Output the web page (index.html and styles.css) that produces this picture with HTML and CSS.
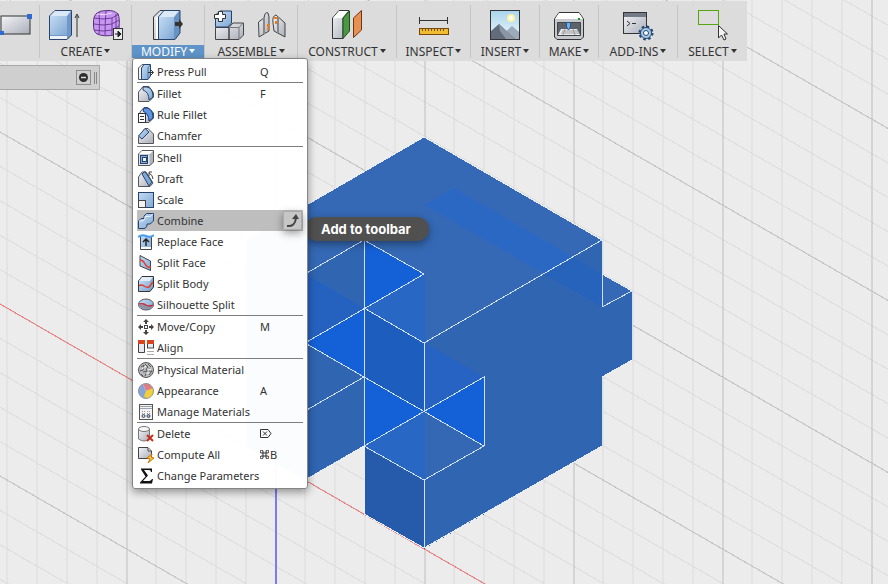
FILE: index.html
```
<!DOCTYPE html>
<html lang="en">
<head>
    <meta charset="UTF-8">
    <meta name="viewport" content="width=device-width, initial-scale=1.0">
    <title>Modify Menu</title>
    <link rel="stylesheet" href="styles.css">
</head>
<body>
    <svg class="canvas" aria-hidden="true">
      <defs>
        <linearGradient id="steel" x1="0" y1="0" x2="1" y2="1">
          <stop offset="0" stop-color="#f4f5f8"/><stop offset="1" stop-color="#a9adb8"/>
        </linearGradient>
        <linearGradient id="blue" x1="0" y1="0" x2="1" y2="1">
          <stop offset="0" stop-color="#c3dbf3"/><stop offset="1" stop-color="#80a8d4"/>
        </linearGradient>
        <linearGradient id="sky" x1="0" y1="0" x2="0" y2="1">
          <stop offset="0" stop-color="#a9d5ee"/><stop offset="1" stop-color="#eef7fb"/>
        </linearGradient>
        <!-- one tile holds two major columns and one major diagonal step -->
        <pattern id="grid" x="126.5" y="33" width="298" height="172" patternUnits="userSpaceOnUse">
          <path class="minor" d="M29.8 0V172M59.6 0V172M89.4 0V172M119.2 0V172M178.8 0V172M208.6 0V172M238.4 0V172M268.2 0V172"/>
          <path class="minor" d="M0 34.4L298 206.4M0 68.8L298 240.8M0 103.2L298 275.2M0 137.6L298 309.6M0 -137.6L298 34.4M0 -103.2L298 68.8M0 -68.8L298 103.2M0 -34.4L298 137.6"/>
          <path class="major" d="M0 0V172M149 0V172M298 0V172M0 0L298 172"/>
        </pattern>
      </defs>
      <rect width="100%" height="100%" fill="url(#grid)"/>
      <path class="axis-x" d="M0 304L1600 1228"/>
      <path class="axis-z" d="M275.5 300V1200"/>
      <g class="model">
        <path fill="#3569b5" d="M424.5 137L602.5 240L424.5 343L364.5 240L305 274L246 240Z"/>
        <path fill="#2b68c4" d="M424.5 205L454 188L602.5 274V307Z"/>
        <path fill="#3065b2" d="M424.5 343L602.5 240V307L632 291V360L602.5 377V446L424.5 548.5Z"/>
        <path fill="#2763bb" d="M543.5 274L573 257L602.5 274V307Z"/>
        <path fill="#3569b5" d="M602.5 274L632 291L602.5 308Z"/>
        <path fill="#3065b2" d="M246 240L305 274L364.5 240V446L305 480L246 446Z"/>
        <path fill="#2562c0" d="M305 274L364.5 308L305 343Z"/>
        <path fill="#1461d7" d="M364.5 240L424.5 274L364.5 308Z"/>
        <path fill="#2967c4" d="M424.5 274V343L364.5 308Z"/>
        <path fill="#1461d7" d="M364.5 308V377L305 343Z"/>
        <path fill="#1d5dbe" d="M364.5 308L424.5 343V411L364.5 377Z"/>
        <path fill="#2663c2" d="M424.5 343L484 377L424.5 411Z"/>
        <path fill="#1461d7" d="M364.5 377L424.5 411L364.5 446Z"/>
        <path fill="#1461d7" d="M484 377V446L424.5 411Z"/>
        <path fill="#2967c4" d="M424.5 411V480L364.5 446Z"/>
        <path fill="#3568b4" d="M424.5 411L484 446L424.5 480Z"/>
        <path fill="#265bab" d="M364.5 446L424.5 480V548.5L364.5 514Z"/>
        <path class="edge" d="M424 343L602 240V307L632 291V360M602 377V446M305 274L364 240L424 274L305 343L484 446L424 480L364 446L484 377V446M364 240V446M364 308L424 343V411M364 377L305 411M424 480V548"/>
        <path class="edge outline" d="M246 240L424 137L602 240M602 274L632 291M632 360L602 377M602 446L424 548L364 514V446L305 480"/>
      </g>
    </svg>

    <nav class="toolbar">
      <div class="group">
        <div class="icons">
          <svg width="32" height="24" viewBox="0 0 32 24"><rect x="1" y="3" width="29" height="18" fill="url(#steel)" stroke="#333"/><rect x="27" y="1" width="5" height="5" fill="#2f6ad0"/><rect x="0" y="18" width="4" height="4" fill="#2f6ad0"/></svg>
        </div>
      </div>
      <div class="group">
        <div class="icons">
          <svg width="32" height="32" viewBox="0 0 32 32"><path d="M1.500 7L7 1.500H23.500V26L19 30.500H1.500Z" fill="#6f98c8" stroke="#26426d"/><path d="M2 7L7 2H23L19 7Z" fill="#d9e7f6"/><path d="M2 7H19V26H2Z" fill="url(#blue)"/><path d="M2 27H19V30H2Z" fill="#eef1f5"/><path d="M29 28V7M27 9L29 5L31 9" fill="none" stroke="#333"/></svg>
          <svg width="32" height="32" viewBox="0 0 32 32"><path d="M5 4Q8 1.500 15 1.500Q22 1 26 5Q28 9 27 19Q27 23 22 26Q12 28 5 25Q1 22 1.500 15Q1 7 5 4Z" fill="#c697ee" stroke="#59307f"/><path d="M2 9Q11 11 20 9L27 5M2 15Q11 17 20 15L27 11M2 21Q11 23 20 21L27 17M7 3Q8 14 7 26M14 2Q13 14 13 27M20 9V26M24 5V24" fill="none" stroke="#713b9e"/><path d="M5 5Q13 7 20 4" fill="none" stroke="#f0dcff"/><rect x="21.500" y="19.500" width="9" height="11" fill="#e9e9e9" stroke="#333"/><path d="M23 25H28M26 22L29 25L26 28Z" fill="#222" stroke="#222"/></svg>
        </div>
        <button class="label" type="button">CREATE</button>
      </div>
      <div class="group modify">
        <div class="icons">
          <svg width="32" height="32" viewBox="0 0 32 32"><path d="M1.500 8L8 1.500H14V30.500H1.500Z" fill="url(#steel)" stroke="#333"/><path d="M6.500 8L12 1.500H28V24L23 30.500H6.500Z" fill="#6992c4" stroke="#26426d"/><path d="M7 8L12 2H27L22 8Z" fill="#dbe9f7"/><path d="M7 8H22V30H7Z" fill="url(#blue)"/><path d="M5 8V30" stroke="#fff" stroke-width="2"/><path d="M23 13H27V10L31 15L27 20V17H23Z" fill="#333"/></svg>
        </div>
        <button class="label active" type="button" aria-expanded="true">MODIFY</button>
      </div>
      <div class="group">
        <div class="icons">
          <svg width="32" height="32" viewBox="0 0 32 32"><path d="M2.500 18.500V30.500H16V18.500ZM16 18.500L20 14H30.500V26L26 30.500H16Z" fill="url(#steel)" stroke="#444"/><path d="M16.500 18.500H26L30 14M26 18.500V30" fill="none" stroke="#777"/><path d="M2.500 6L7 2H18.500V14L15 18H2.500Z" fill="url(#blue)" stroke="#26426d"/><path d="M5.500 2.500H9.500V5.500H12.500V9.500H9.500V12.500H5.500V9.500H1.500V5.500H5.500Z" fill="#fff" stroke="#333"/></svg>
          <svg width="32" height="32" viewBox="0 0 32 32"><path d="M1.500 13L7 9Q8 2 11 4L12 8V22L2 28Z" fill="url(#steel)" stroke="#444"/><path d="M16 14Q15 7 19 6L28 14V28L17 22Z" fill="url(#steel)" stroke="#444"/><path d="M7 9V25M21 8V24" stroke="#888" stroke-width="2"/><path d="M11 19V21M11 15V18M19 12V15M17 9H20" stroke="#ff7900" stroke-width="2"/></svg>
        </div>
        <button class="label" type="button">ASSEMBLE</button>
      </div>
      <div class="group">
        <div class="icons">
          <svg width="32" height="32" viewBox="0 0 32 32"><path d="M1.500 9L8 1.500H18L12 9V29.500H1.500Z" fill="url(#steel)" stroke="#333"/><path d="M12 9L18.500 2V22L12 29.500Z" fill="#4d9744" stroke="#1e4d1b"/><path d="M2 9L8 2H17L11 9Z" fill="#fff"/><path d="M22.500 9L30.500 1.500V21L22.500 28.500Z" fill="#e69052" stroke="#733313"/></svg>
        </div>
        <button class="label" type="button">CONSTRUCT</button>
      </div>
      <div class="group">
        <div class="icons">
          <svg width="32" height="32" viewBox="0 0 32 32"><path d="M2 11.500H30M1.500 8V15M29.500 8V15" stroke="#333"/><rect x="1.500" y="19.500" width="29" height="6" fill="#f0bd31" stroke="#79460b"/><path d="M4.500 20V22M7.500 20V22M10.500 20V22M13.500 20V22M16.500 20V22M19.500 20V22M22.500 20V22M25.500 20V22" stroke="#775019"/></svg>
        </div>
        <button class="label" type="button">INSPECT</button>
      </div>
      <div class="group">
        <div class="icons">
          <svg width="32" height="32" viewBox="0 0 32 32"><rect x="1.500" y="1.500" width="29" height="29" fill="url(#sky)"/><circle cx="22" cy="9" r="4" fill="#fff3a4"/><circle cx="22" cy="9" r="2" fill="#fff"/><path d="M14 25L23 17L30 23V30H14Z" fill="#9caab9"/><path d="M2 22L10 15L26 30H2Z" fill="#626c7c"/><path d="M10 15L26 30H17L11 22Z" fill="#8b95a4"/><rect x="1.500" y="1.500" width="29" height="29" fill="none" stroke="#333"/></svg>
        </div>
        <button class="label" type="button">INSERT</button>
      </div>
      <div class="group">
        <div class="icons">
          <svg width="32" height="32" viewBox="0 0 32 32"><path d="M1.500 10L6 3.500H26L30.500 10V28L28 30.500H4L1.500 28Z" fill="#c5c8ce" stroke="#333"/><path d="M2 10L6 4H26L30 10Z" fill="#fff"/><path d="M4.500 13.500H27.500V26.500H4.500Z" fill="#5d626b" stroke="#444"/><path d="M8 20H24L27 26H5Z" fill="#e9edf1"/><path d="M9 22H25M8 24H26M12 20L10 26M20 20L22 26" stroke="#999"/><path d="M13.500 13.500H17.500V18L15.500 21L13.500 18Z" fill="#74afe4" stroke="#22578d"/><path d="M25 10H27" stroke="#0b9a1a" stroke-width="2"/></svg>
        </div>
        <button class="label" type="button">MAKE</button>
      </div>
      <div class="group">
        <div class="icons">
          <svg width="32" height="32" viewBox="0 0 32 32"><rect x="1.500" y="3.500" width="23" height="21" fill="url(#steel)" stroke="#333"/><path d="M2 4H24V8H2Z" fill="#747b87"/><path d="M5 12L8 14.500L5 17M10 14.500H14" fill="none" stroke="#333"/><circle cx="24" cy="24" r="5.500" fill="#a4c9ec" stroke="#24456f"/><circle cx="24" cy="24" r="6.500" fill="none" stroke="#24456f" stroke-width="2" stroke-dasharray="2.500 2.600"/><circle cx="24" cy="24" r="2.500" fill="#fff" stroke="#24456f"/></svg>
        </div>
        <button class="label" type="button">ADD-INS</button>
      </div>
      <div class="group">
        <div class="icons">
          <svg width="32" height="32" viewBox="0 0 32 32"><rect x="1.500" y="1.500" width="20" height="14" fill="none" stroke="#59a50f"/><path d="M21.500 16.500V29L24.500 26L27 31L29 30L27 25H30.500Z" fill="#f4f4f4" stroke="#333"/></svg>
        </div>
        <button class="label" type="button">SELECT</button>
      </div>
    </nav>

    <aside class="browser">
      <button class="collapse" type="button" aria-label="Collapse"><svg width="11" height="11" viewBox="0 0 11 11"><circle cx="5.500" cy="5.500" r="4.500" fill="#2e2e2e"/><path d="M3 5.500H8" stroke="#ddd" stroke-width="1.500"/></svg></button>
      <span class="grip"></span>
    </aside>

    <div class="dropdown">
      <ul class="menu">
        <li><button type="button"><svg width="16" height="16" viewBox="0 0 16 16"><path d="M.500 4L4 .500H7V15.500H.500Z" fill="#f4f4f4" stroke="#555"/><path d="M3.500 4L6 .500H12.500V12L10 15.500H3.500Z" fill="url(#blue)" stroke="#26426d"/><path d="M10 4V15M10 4L12 1" stroke="#55799f"/><path d="M10 8.500H15M13 6L15.500 8.500L13 11" fill="none" stroke="#333"/></svg><span>Press Pull</span><kbd>Q</kbd></button></li>
        <li class="divided"><button type="button"><svg width="16" height="16" viewBox="0 0 16 16"><path d="M.500 6L5 .500H11L15.500 7V11L11 15.500H.500Z" fill="url(#steel)" stroke="#555"/><path d="M5 1H9Q15 2 15 11L11 14Q11 6 5 4Z" fill="url(#blue)" stroke="#26426d"/></svg><span>Fillet</span><kbd>F</kbd></button></li>
        <li><button type="button"><svg width="16" height="16" viewBox="0 0 16 16"><path d="M2 5L6 .500H10L15.500 6V11L11 15.500H2Z" fill="url(#steel)" stroke="#555"/><path d="M6 1H9Q15 2 15 11L11 14Q11 7 5 4Z" fill="#5f96e1" stroke="#173d82"/><rect x=".500" y="6.500" width="7" height="9" fill="#fff" stroke="#333"/><path d="M2 9.500H6M2 12.500H6" stroke="#333"/></svg><span>Rule Fillet</span></button></li>
        <li><button type="button"><svg width="16" height="16" viewBox="0 0 16 16"><path d="M.500 9V15.500H15.500V6L10 .500H7Z" fill="url(#steel)" stroke="#555"/><path d="M.500 8L7 .500L11 4L4 11Z" fill="url(#blue)" stroke="#26426d"/></svg><span>Chamfer</span></button></li>
        <li class="divided"><button type="button"><svg width="16" height="16" viewBox="0 0 16 16"><path d="M.500 4L4 .500H15.500V12L12 15.500H.500Z" fill="#aeb3be" stroke="#555"/><path d="M1 4L4 1H15L12 4Z" fill="#fff"/><path d="M1 4.500H11.500V15H1Z" fill="#e4e6eb"/><rect x="2.500" y="5.500" width="7" height="8" fill="#83acd9" stroke="#26426d"/><rect x="4.500" y="7.500" width="4" height="4" fill="#eaf4fd" stroke="#26426d"/></svg><span>Shell</span></button></li>
        <li><button type="button"><svg width="16" height="16" viewBox="0 0 16 16"><path d="M.500 6L4 1H8L15 12L12 15.500H.500Z" fill="url(#steel)" stroke="#555"/><path d="M4 3L7 .500L14 11L11 15Z" fill="#7fa8d6" stroke="#26426d"/><path d="M15 8Q15 4 11 2M14 1H11V5" fill="none" stroke="#444"/></svg><span>Draft</span></button></li>
        <li><button type="button"><svg width="16" height="16" viewBox="0 0 16 16"><rect x=".500" y=".500" width="15" height="15" fill="url(#blue)" stroke="#26426d"/><rect x=".500" y="8.500" width="7" height="7" fill="#f2f2f2" stroke="#444"/></svg><span>Scale</span></button></li>
        <li class="hover"><button type="button"><svg width="16" height="16" viewBox="0 0 16 16"><path d="M.500 8L3 5.500H6V3L8.500 .500H15.500V8L12 11H9V13L7 15.500H.500Z" fill="url(#blue)" stroke="#26426d"/><path d="M1 8H5L7 6V3.500H12L15 1" fill="none" stroke="#e8f3ff"/></svg><span>Combine</span></button><button class="pin" type="button" aria-label="Add to toolbar"><svg width="16" height="16" viewBox="0 0 16 16"><path d="M2 13Q10 14 11 5" fill="none" stroke="#444" stroke-width="2"/><path d="M7 6L11 1L14 6Z" fill="#444"/></svg></button></li>
        <li><button type="button"><svg width="16" height="16" viewBox="0 0 16 16"><path d="M2.500 2V15.500H13.500V2" fill="url(#blue)" stroke="#444"/><path d="M3 13H13V15H3Z" fill="#fff"/><path d="M0 3Q4 0 8 2T16 1" fill="none" stroke="#4e9cef" stroke-width="2"/><path d="M8 12V5M5 8L8 5L11 8" fill="none" stroke="#222" stroke-width="1.500"/></svg><span>Replace Face</span></button></li>
        <li><button type="button"><svg width="16" height="16" viewBox="0 0 16 16"><path d="M2 .500L12.500 6V15.500L2 11Z" fill="url(#blue)" stroke="#444"/><path d="M2 5Q5 5 7 9T13 12" fill="none" stroke="#e33b2c" stroke-width="1.500"/></svg><span>Split Face</span></button></li>
        <li><button type="button"><svg width="16" height="16" viewBox="0 0 16 16"><path d="M.500 5L4 .500H15.500V11L12 15.500H.500Z" fill="#82a7d1" stroke="#333"/><path d="M1 5L4 1H15L12 5Z" fill="#e2edf8"/><path d="M1 5H12V15H1Z" fill="url(#blue)"/><path d="M1 10Q3 8 6 10T11 11L15 6" fill="none" stroke="#e33b2c" stroke-width="1.500"/></svg><span>Split Body</span></button></li>
        <li><button type="button"><svg width="16" height="16" viewBox="0 0 16 16"><ellipse cx="8" cy="7.500" rx="7.500" ry="5.500" fill="url(#blue)" stroke="#555"/><path d="M1 10Q8 14 15 10L15 8H1Z" fill="#8f93a6"/><path d="M1 7Q5 6 8 8T15 8" fill="none" stroke="#c6303d" stroke-width="1.500"/></svg><span>Silhouette Split</span></button></li>
        <li class="divided"><button type="button"><svg width="16" height="16" viewBox="0 0 16 16"><path d="M8 0L11 3H9V5H7V3H5ZM8 16L11 13H9V11H7V13H5ZM0 8L3 5V7H5V9H3V11ZM16 8L13 5V7H11V9H13V11Z" fill="#444"/><rect x="6.500" y="6.500" width="3" height="3" fill="#fff" stroke="#444"/></svg><span>Move/Copy</span><kbd>M</kbd></button></li>
        <li><button type="button"><svg width="16" height="16" viewBox="0 0 16 16"><path d="M.500 .500H6.500V12.500H.500ZM9.500 .500H15.500V8H9.500Z" fill="#e7e9ee" stroke="#444"/><path d="M0 0H7V4H0ZM9 0H16V4H9Z" fill="#d9441e"/><path d="M9 8.500H16M9 11.500H16M9 14.500H16" stroke="#aaa"/></svg><span>Align</span></button></li>
        <li class="divided"><button type="button"><svg width="16" height="16" viewBox="0 0 16 16"><circle cx="8" cy="8" r="7.500" fill="#b9bbbd" stroke="#555"/><path d="M3 5L6 3L5 8L2 9M7 2L10 5L8 8L12 7M10 2L13 5M5 10L9 9L7 14M11 9L14 9L11 13M3 12L5 14" fill="none" stroke="#555"/><path d="M4 7L8 4M9 7L13 8M8 11L11 11" stroke="#fff"/></svg><span>Physical Material</span></button></li>
        <li><button type="button"><svg width="16" height="16" viewBox="0 0 16 16"><path d="M8 8L5 1Q0 3 .500 9Q1 14 8 15.500Z" fill="#85a5dc"/><path d="M8 8L5 1Q12 -1 15 6Z" fill="#df7e84"/><path d="M8 8L15 5Q17 13 8 15.500L6 13Z" fill="#f1cf37"/><circle cx="8" cy="8" r="7.500" fill="none" stroke="#94918f"/></svg><span>Appearance</span><kbd>A</kbd></button></li>
        <li><button type="button"><svg width="16" height="16" viewBox="0 0 16 16"><rect x="1.500" y=".500" width="13" height="15" fill="#f3f3f3" stroke="#555"/><path d="M2 2.500H14M2 4.500H14" stroke="#9ba3af"/><path d="M4 7.500H7M9 7.500H12M4 9.500H7M9 9.500H12" stroke="#999" stroke-dasharray="1 1"/><circle cx="5.500" cy="12" r="1.500" fill="#c9d7e9" stroke="#445"/><circle cx="10.500" cy="12" r="1.500" fill="#9bb7df" stroke="#445"/></svg><span>Manage Materials</span></button></li>
        <li class="divided"><button type="button"><svg width="16" height="16" viewBox="0 0 16 16"><path d="M.500 3V13Q6 17 11.500 13V3" fill="url(#steel)" stroke="#777"/><ellipse cx="6" cy="3" rx="5.500" ry="2.500" fill="#f7f7f7" stroke="#777"/><path d="M9 9L15 15M15 9L9 15" stroke="#c92c1c" stroke-width="2"/></svg><span>Delete</span><kbd><svg width="12" height="9" viewBox="0 0 12 9"><path d="M.500 .500H8L11 4.500L8 8.500H.500ZM3 2.500L7 6.500M7 2.500L3 6.500" fill="none" stroke="#333"/></svg></kbd></button></li>
        <li><button type="button"><svg width="16" height="16" viewBox="0 0 16 16"><path d="M.500 .500H10L13.500 4V11.500H.500Z" fill="url(#steel)" stroke="#444"/><path d="M10 1V4H13" fill="#fff" stroke="#444"/><path d="M14 7L9 11L12 12L10 16L16 11L13 10Z" fill="#ffc52b" stroke="#c87514"/></svg><span>Compute All</span><kbd><svg width="9" height="9" viewBox="0 0 9 9"><path d="M3 3H6V6H3ZM3 3H2A1.400 1.400 0 1 1 3 2ZM6 3V2A1.400 1.400 0 1 1 7 3ZM6 6H7A1.400 1.400 0 1 1 6 7ZM3 6V7A1.400 1.400 0 1 1 2 6Z" fill="none" stroke="#333"/></svg>B</kbd></button></li>
        <li><button type="button"><svg width="16" height="16" viewBox="0 0 16 16"><path d="M3 .500H14V4H13Q13 2 11 2H6L10 7.500L5 13H11Q13 13 14 11H15L14 15.500H2V14.500L7.500 8.500L3 1.500Z" fill="#111"/></svg><span>Change Parameters</span></button></li>
      </ul>
      <div class="tooltip" role="tooltip">Add to toolbar</div>
    </div>
</body>
</html>
```
FILE: styles.css
```
* {
  box-sizing: border-box;
}

body {
  margin: 0;
  min-height: 100vh;
  overflow: hidden;
  background-color: #ececec;
  font-family: "Noto Sans", sans-serif;
  font-size: 11px;
  color: #333;
}

button {
  margin: 0;
  padding: 0;
  border: 0;
  background: none;
  font: inherit;
  color: inherit;
}

svg {
  display: block;
  flex: none;
}

/* drawing area, lies behind everything else */
.canvas {
  position: absolute;
  top: 0;
  left: 0;
  width: 100%;
  height: 100%;
  z-index: -1;
}

.minor, .major, .axis-x, .axis-z, .edge {
  fill: none;
  stroke-width: 1;
  shape-rendering: crispEdges;
}

.minor { stroke: #dcdcdc; }
.major { stroke: #bdbdbd; }
.axis-x { stroke: #f08080; }
.edge { stroke: #cfdff5; }
.outline { stroke: #e8eefa; }

.axis-z {
  stroke: #7c7cf0;
  stroke-width: 2;
}

.model {
  shape-rendering: crispEdges;
}

.toolbar {
  display: grid;
  grid-template-columns: 40px 92px 73px 93px 99px 74px 69px 59px 79px 69px;
  width: max-content;
  height: 60px;
  margin-top: 1px;
  padding: 4px 0 3px;
  background-color: #dcdcdc;
}

.group {
  display: flex;
  flex-direction: column;
  border-right: 1px solid #c5c5c5;
}

.group:last-child {
  border-right: 0;
}

.group:first-child .icons {
  justify-content: flex-start;
}

.icons {
  display: flex;
  justify-content: center;
  align-items: center;
  gap: 12px;
  height: 40px;
}

.label {
  height: 13px;
  font-size: 12px;
  line-height: 13px;
  white-space: nowrap;
}

.label::after {
  content: "";
  display: inline-block;
  margin-left: 2px;
  vertical-align: 3px;
  border: 3px solid transparent;
  border-top: 4px solid #333;
  border-bottom: 0;
}

.label.active {
  background-color: #5e94c9;
  color: #fff;
}

.label.active::after {
  border-top-color: #fff;
}

.browser {
  display: flex;
  align-items: center;
  justify-content: flex-end;
  gap: 3px;
  width: 100px;
  height: 25px;
  margin-top: 4px;
  padding-right: 2px;
  border: 1px solid #a8a8a8;
  border-left: 0;
  background-color: #cfcfcf;
}

.collapse {
  display: grid;
  place-items: center;
  width: 15px;
  height: 15px;
  border: 1px solid #8e8e8e;
}

.grip {
  width: 3px;
  height: 12px;
  border: 1px solid #888;
  border-width: 0 1px;
}

.dropdown {
  position: absolute;
  top: 58px;
  left: 132px;
  width: 176px;
}

.menu {
  position: relative;
  z-index: 2;
  margin: 0;
  padding: 2px 4px;
  list-style: none;
  border: 1px solid #858585;
  border-radius: 3px;
  background-color: rgba(255, 255, 255, 0.98);
  box-shadow: 0 3px 9px rgba(0, 0, 0, 0.4);
}

.menu li {
  display: flex;
  position: relative;
}

.menu li.divided {
  border-top: 1px solid #7d7d7d;
}

.menu li > button:first-child {
  display: grid;
  grid-template-columns: 16px 100px 1fr;
  align-items: center;
  column-gap: 3px;
  flex: 1;
  height: 21px;
  padding-left: 1px;
  line-height: 21px;
  text-align: left;
  white-space: nowrap;
}

.menu kbd {
  display: flex;
  align-items: center;
  gap: 1px;
  font-family: inherit;
}

.menu li.hover {
  background-color: #bebebe;
}

.menu .pin {
  position: absolute;
  top: 1px;
  right: 1px;
  display: grid;
  place-items: center;
  width: 19px;
  height: 19px;
  border: 1px solid #aaa;
  background-color: #c6c6c6;
  box-shadow: 0 3px 9px rgba(0, 0, 0, 0.4);
}

.tooltip {
  position: absolute;
  top: 159px;
  left: 173px;
  z-index: 1;
  padding: 0 18px 0 16px;
  border-radius: 12px;
  background-color: #505050;
  box-shadow: 0 3px 9px rgba(0, 0, 0, 0.4);
  font-family: Inter, sans-serif;
  font-size: 13px;
  font-weight: 700;
  line-height: 24px;
  white-space: nowrap;
  color: #fff;
}
```
